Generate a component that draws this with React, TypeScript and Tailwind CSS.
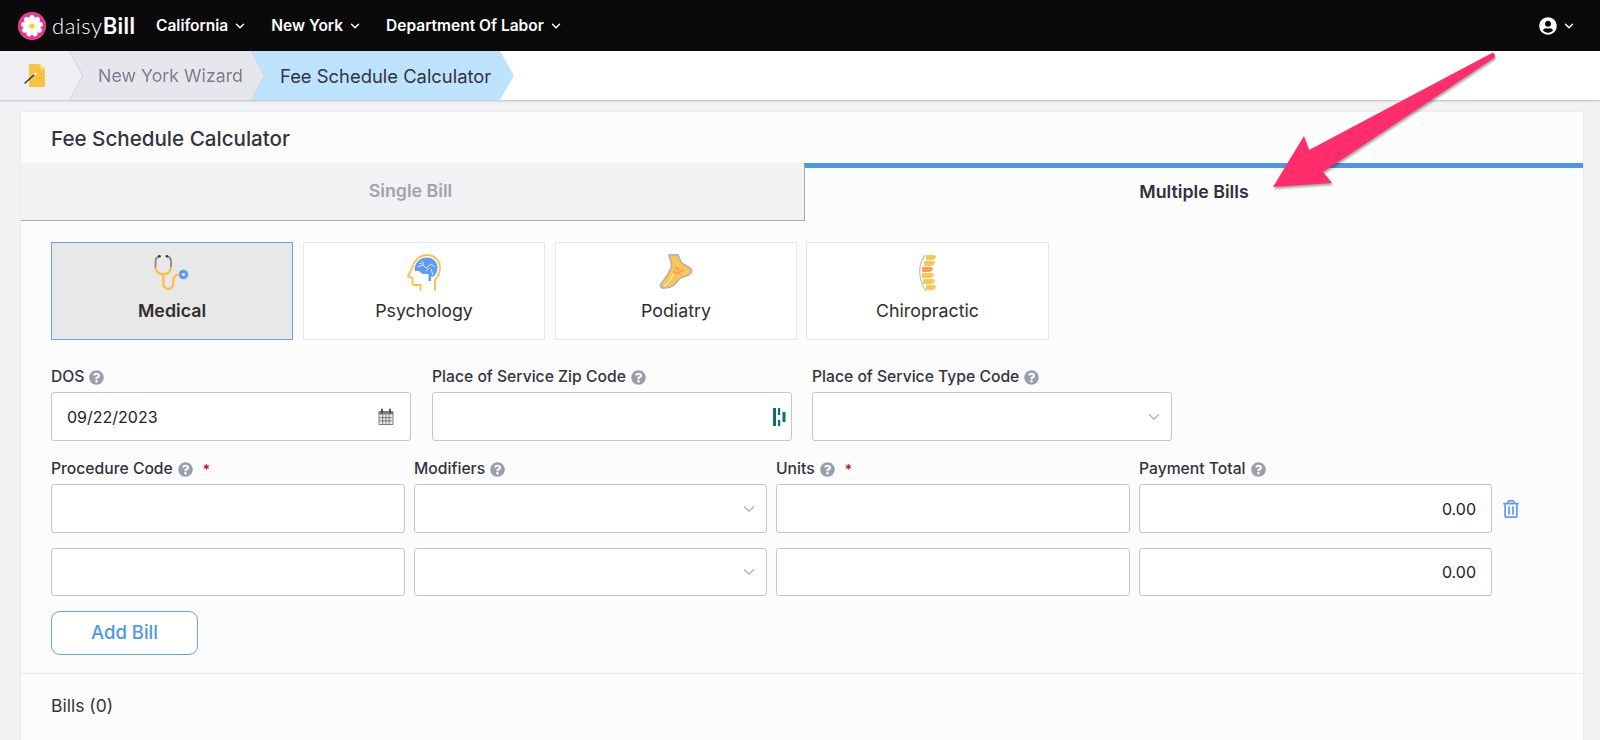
import { ChevronDown } from "lucide-react";
import { FaQuestionCircle, FaUserCircle, FaRegTrashAlt } from "react-icons/fa";

function Daisy() {
  const petals = [0, 40, 80, 120, 160, 200, 240, 280, 320];
  return (
    <svg width="28" height="28" viewBox="0 0 28 28">
      <circle cx="14" cy="14" r="14" fill="#ec4899" />
      <circle cx="14" cy="14" r="13" fill="#e8378f" />
      {petals.map((a) => (
        <ellipse key={a} cx="14" cy="7.5" rx="2.9" ry="4.6" fill="#fff" transform={`rotate(${a} 14 14)`} />
      ))}
      <circle cx="14" cy="14" r="2.6" fill="#f7d21e" />
    </svg>
  );
}

function WizardIcon() {
  return (
    <svg width="24" height="28" viewBox="0 0 24 28">
      <path d="M6 2h11l5 5v17a1 1 0 0 1-1 1H6z" fill="#f9c343" />
      <path d="M17 2l5 5h-5z" fill="#fbdb83" />
      <path d="M2 21L11 13" stroke="#2b2b2b" strokeWidth="1.400" strokeLinecap="round" />
      <path d="M11 13l2-2" stroke="#fff" strokeWidth="1.400" />
      <path d="M15 8v2M17 12h2M16 16h3M16 20h2" stroke="#e9a92f" strokeWidth="1" />
    </svg>
  );
}

function Stethoscope() {
  return (
    <svg width="36" height="38" viewBox="0 0 36 38" fill="none">
      <path d="M5 2.500C2.500 3 1.500 5 1.500 8v6" stroke="#8f8f8f" strokeWidth="2" strokeLinecap="round" />
      <path d="M13.500 2.500c2.500 .5 3.500 2.500 3.500 5.500v6" stroke="#8f8f8f" strokeWidth="2" strokeLinecap="round" />
      <circle cx="5.500" cy="2.300" r="1.300" fill="#333" />
      <circle cx="13" cy="2.300" r="1.300" fill="#333" />
      <path d="M1.500 13c0 4.500 3.500 7.500 7.750 7.500S17 17.500 17 13" stroke="#fcbf49" strokeWidth="2.400" />
      <path d="M9.250 20.500v8.500c0 3.500 2 6 5 6s5-2.500 5-6v-3c0-2.500 1.500-4.500 5-5.500" stroke="#fcbf49" strokeWidth="2.400" />
      <circle cx="29.500" cy="20.500" r="4.800" fill="#5f9bf0" />
      <circle cx="29.500" cy="20.500" r="1.600" fill="#e8e8e8" />
    </svg>
  );
}

function Brain() {
  return (
    <svg width="34" height="38" viewBox="0 0 34 38" fill="none">
      <path d="M13.500 37v-6H7.500c-1.500 0-2-1-2-2v-5L1 22.500 5.500 13C7.500 6 13 1 20 1c7.500 0 13 6 13 13 0 6-2.500 9-5 12v11" stroke="#fcbf49" strokeWidth="1.800" />
      <path d="M7.500 14C9 7.500 14 3.500 20 3.500c6 0 10.500 4.500 10.500 10 0 3.500-1.500 6.500-3.500 9h-3v4.500h-2.500v-7h-6L12 17H8z" fill="#5f9bf0" />
      <path d="M11 13l5-2 3 3 5-4 4 3M15 7l2 4M24 15l2 6M19 17l3-3M12 9l3 1" stroke="#dbe9fb" strokeWidth="1" />
    </svg>
  );
}

function Foot() {
  return (
    <svg width="34" height="38" viewBox="0 0 34 38" fill="none">
      <path d="M10 1c.5 3 2 6 2.500 9 .5 3-2 7-3.500 10-1.500 3-5 6.500-7 10-1 2-.5 4 2 4 5 0 9-.5 12-4 2.500-3 4-6 8-7 4-1 9-2.500 8.500-6.500-.5-3.500-8-5-10.500-8.500-1-2-2-4.500-3-7z" fill="#fcc654" stroke="#b5b5b5" strokeWidth="1.800" strokeLinejoin="round" />
      <path d="M14 17l4 3 7-5M16 13l4 3" stroke="#fb9d52" strokeWidth="1.800" />
      <path d="M9 29l6-9M5 32l4-3" stroke="#fff" strokeWidth="1" />
    </svg>
  );
}

function Spine() {
  const items: [number, number, number][] = [
    [7, 1, 10], [5, 7, 11], [3, 13, 11], [3, 19, 12], [4, 25, 12], [7, 31, 10],
  ];
  return (
    <svg width="18" height="38" viewBox="0 0 18 38" fill="none">
      <path d="M6 1C1.500 7 0.500 13 0.800 19c.3 6 2.200 12 6 18" stroke="#c4c4c4" strokeWidth="1.300" />
      {items.map(([x, y, w], i) => (
        <path key={y} d={`M${x} ${y}h${w - 2}l2 1-1 3 -3 1h-${w - 4}z`} fill={i === 2 ? "#fb9d52" : "#fcc654"} />
      ))}
    </svg>
  );
}

function Calendar() {
  return (
    <svg width="18" height="18" viewBox="0 0 18 18" fill="none">
      <rect x="1.500" y="3" width="15" height="14" rx="1" fill="#7d7d7d" />
      <rect x="2.500" y="6.500" width="13" height="9.500" fill="#f2f2f2" />
      <path d="M5.700 6.500v9.500M8.900 6.500v9.500M12.100 6.500v9.500M2.500 9.700h13M2.500 12.900h13" stroke="#6b6b6b" strokeWidth=".9" />
      <path d="M5 1.500v3M13 1.500v3" stroke="#444" strokeWidth="1.800" strokeLinecap="round" />
    </svg>
  );
}

function ZipMark() {
  return (
    <svg width="14" height="20" viewBox="0 0 14 20">
      <rect x="1" y="1" width="3" height="18" fill="#0f6c80" />
      <rect x="6" y="1" width="2.200" height="7" fill="#0f6c80" />
      <rect x="6" y="13" width="2.200" height="6" fill="#0f6c80" />
      <rect x="10.500" y="5" width="3" height="10" fill="#0f6c80" />
    </svg>
  );
}

function Help() {
  return <FaQuestionCircle className="text-[#9a9dad] text-[15px] shrink-0" />;
}

function Label({ text, required }: { text: string; required?: boolean }) {
  return (
    <div className="flex items-center gap-[5px] h-5 text-[15.700px] font-[450] text-[#33333d]">
      <span>{text}</span>
      <Help />
      {required && <span className="text-[#d0021b] ml-[5px] text-[14px]">*</span>}
    </div>
  );
}

function Box({ children, className }: { children?: React.ReactNode; className: string }) {
  return (
    <div className={`bg-white border border-[#c6c6c8] rounded-[3px] flex items-center text-[16px] text-[#222] ${className}`}>
      {children}
    </div>
  );
}

function Caret() {
  return <ChevronDown className="ml-auto mr-[8px] text-[#b4b4b8]" size={18} strokeWidth={1.800} />;
}

function NavItem({ text }: { text: string }) {
  return (
    <div className="flex items-center gap-[5px] text-white text-[15.500px] font-semibold">
      <span>{text}</span>
      <ChevronDown size={14} strokeWidth={2.500} />
    </div>
  );
}

function Tile({ name, active, children, className }: { name: string; active?: boolean; children: React.ReactNode; className?: string }) {
  return (
    <div className={`h-[98px] border flex flex-col items-center pt-[10px] ${active ? "bg-[#e8e8e8] border-[#6a9fee] font-semibold text-[#2e2e2e]" : "bg-white border-[#e8e8ea] text-[#2e2e2e]"} ${className ?? "w-[242px]"}`}>
      <div className="h-[40px] flex items-center justify-center">{children}</div>
      <div className="mt-[6px] text-[17.800px] leading-6">{name}</div>
    </div>
  );
}

export default function App() {
  return (
    <div className="relative w-[1600px] h-[740px] overflow-hidden bg-[#f2f2f5] font-['Inter','Liberation_Sans',sans-serif]">
      <header className="h-[51px] bg-[#0a0a0a] flex items-center pl-[18px] pr-[24px]">
        <Daisy />
        <span className="ml-[6px] text-white text-[22px] leading-none font-light w-[90px] font-['Lato',sans-serif] tracking-[0.55px]">
          daisy<span className="font-bold">Bill</span>
        </span>
        <div className="flex items-center ml-[14px] gap-[24px]">
          <NavItem text="California" />
          <NavItem text="New York" />
          <NavItem text="Department Of Labor" />
        </div>
        <div className="ml-auto flex items-center gap-[5px] text-white">
          <FaUserCircle className="text-[18px]" />
          <ChevronDown size={14} strokeWidth={2.500} />
        </div>
      </header>

      <nav className="h-[49px] bg-white flex shadow-[0_1px_2px_rgba(0,0,0,0.22)]">
        <div className="relative z-30 [filter:drop-shadow(1px_0_0_#cfd1d8)]">
          <div className="w-[82px] h-full bg-[#eff0f3] [clip-path:polygon(0_0,69px_0,82px_50%,69px_100%,0_100%)] flex items-center pl-[23px]">
            <WizardIcon />
          </div>
        </div>
        <div className="relative z-20 -ml-[13px] [filter:drop-shadow(1px_0_0_#cfd1d8)]">
          <div className="w-[195px] h-full bg-[#e6e7ec] [clip-path:polygon(0_0,182px_0,195px_50%,182px_100%,0_100%)] flex items-center pl-[29px] pt-[2px] text-[17.800px] text-[#7b7d8f] whitespace-nowrap">
            New York Wizard
          </div>
        </div>
        <div className="relative z-10 -ml-[14px]">
          <div className="w-[264px] h-full bg-[#bde3fe] [clip-path:polygon(0_0,250px_0,264px_50%,250px_100%,0_100%)] flex items-center pl-[30px] pt-[2px] text-[18.400px] text-[#33333f] whitespace-nowrap">
            Fee Schedule Calculator
          </div>
        </div>
      </nav>

      <main className="mt-[12px] ml-[21px] w-[1562px] h-[700px] bg-[#fcfcfd] shadow-[0_0_2px_rgba(0,0,0,0.08)]">
        <div className="h-[51px] pl-[30px] pt-[4px] flex items-center text-[20.600px] font-medium text-[#33333d]">
          Fee Schedule Calculator
        </div>
        <div className="flex h-[58px] text-[17.800px] font-semibold">
          <div className="w-[783px] bg-[#f2f2f5] border-b border-[#a9abb3] flex items-center justify-center text-[#a0a2ae] pr-[4px]">
            Single Bill
          </div>
          <div className="flex-1 border-t-[5px] border-t-[#4f97e6] border-l border-l-[#a9abb3] flex items-center justify-center text-[#2f3040] pb-[4px]">
            Multiple Bills
          </div>
        </div>

        <div className="pl-[30px] pt-[21px] pb-[18px]">
          <div className="flex gap-[10px]">
            <Tile name="Medical" active className="w-[242px]"><Stethoscope /></Tile>
            <Tile name="Psychology"><Brain /></Tile>
            <Tile name="Podiatry"><Foot /></Tile>
            <Tile name="Chiropractic" className="w-[243px] -ml-[1px]"><Spine /></Tile>
          </div>

          <div className="flex mt-[27px]">
            <div className="w-[360px]">
              <Label text="DOS" />
              <Box className="h-[49px] mt-[5px] pl-[15px] w-full">
                <span>09/22/2023</span>
                <span className="ml-auto mr-[15px]"><Calendar /></span>
              </Box>
            </div>
            <div className="w-[360px] ml-[21px]">
              <Label text="Place of Service Zip Code" />
              <Box className="h-[49px] mt-[5px] w-full">
                <span className="ml-auto mr-[5px]"><ZipMark /></span>
              </Box>
            </div>
            <div className="w-[360px] ml-[20px]">
              <Label text="Place of Service Type Code" />
              <Box className="h-[49px] mt-[5px] w-full"><Caret /></Box>
            </div>
          </div>

          <div className="flex gap-[9px] mt-[18px]">
            <div className="w-[354px]">
              <Label text="Procedure Code" required />
              <Box className="h-[49px] mt-[5px] w-full" />
              <Box className="h-[48px] mt-[15px] w-full" />
            </div>
            <div className="w-[353px]">
              <Label text="Modifiers" />
              <Box className="h-[49px] mt-[5px] w-full"><Caret /></Box>
              <Box className="h-[48px] mt-[15px] w-full"><Caret /></Box>
            </div>
            <div className="w-[354px]">
              <Label text="Units" required />
              <Box className="h-[49px] mt-[5px] w-full" />
              <Box className="h-[48px] mt-[15px] w-full" />
            </div>
            <div className="w-[353px]">
              <Label text="Payment Total" />
              <Box className="h-[49px] mt-[5px] w-full justify-end pr-[15px]">0.00</Box>
              <Box className="h-[48px] mt-[15px] w-full justify-end pr-[15px]">0.00</Box>
            </div>
            <div className="pt-[25px] pl-[1px]">
              <div className="h-[49px] flex items-center">
                <FaRegTrashAlt className="text-[#5f9bf0] text-[18px]" />
              </div>
            </div>
          </div>

          <button className="mt-[15px] block w-[147px] h-[44px] rounded-[9px] border border-[#6a9fee] bg-white text-[#4f97e6] text-[18.500px] font-medium">
            Add Bill
          </button>
        </div>

        <div className="border-t border-[#e8e8ea] pl-[30px] pt-[20px] text-[17.500px] leading-6 text-[#33333d]">
          Bills (0)
        </div>
      </main>

      <svg className="absolute left-0 top-0 pointer-events-none [filter:drop-shadow(1px_2px_1px_rgba(0,0,0,0.35))]" width="1600" height="740" viewBox="0 0 1600 740">
        <path d="M1492 53c2-1 4 3 2 5L1323 172l9 11-59 4 31-51 5 14z" fill="#ff2d6b" />
      </svg>
    </div>
  );
}
